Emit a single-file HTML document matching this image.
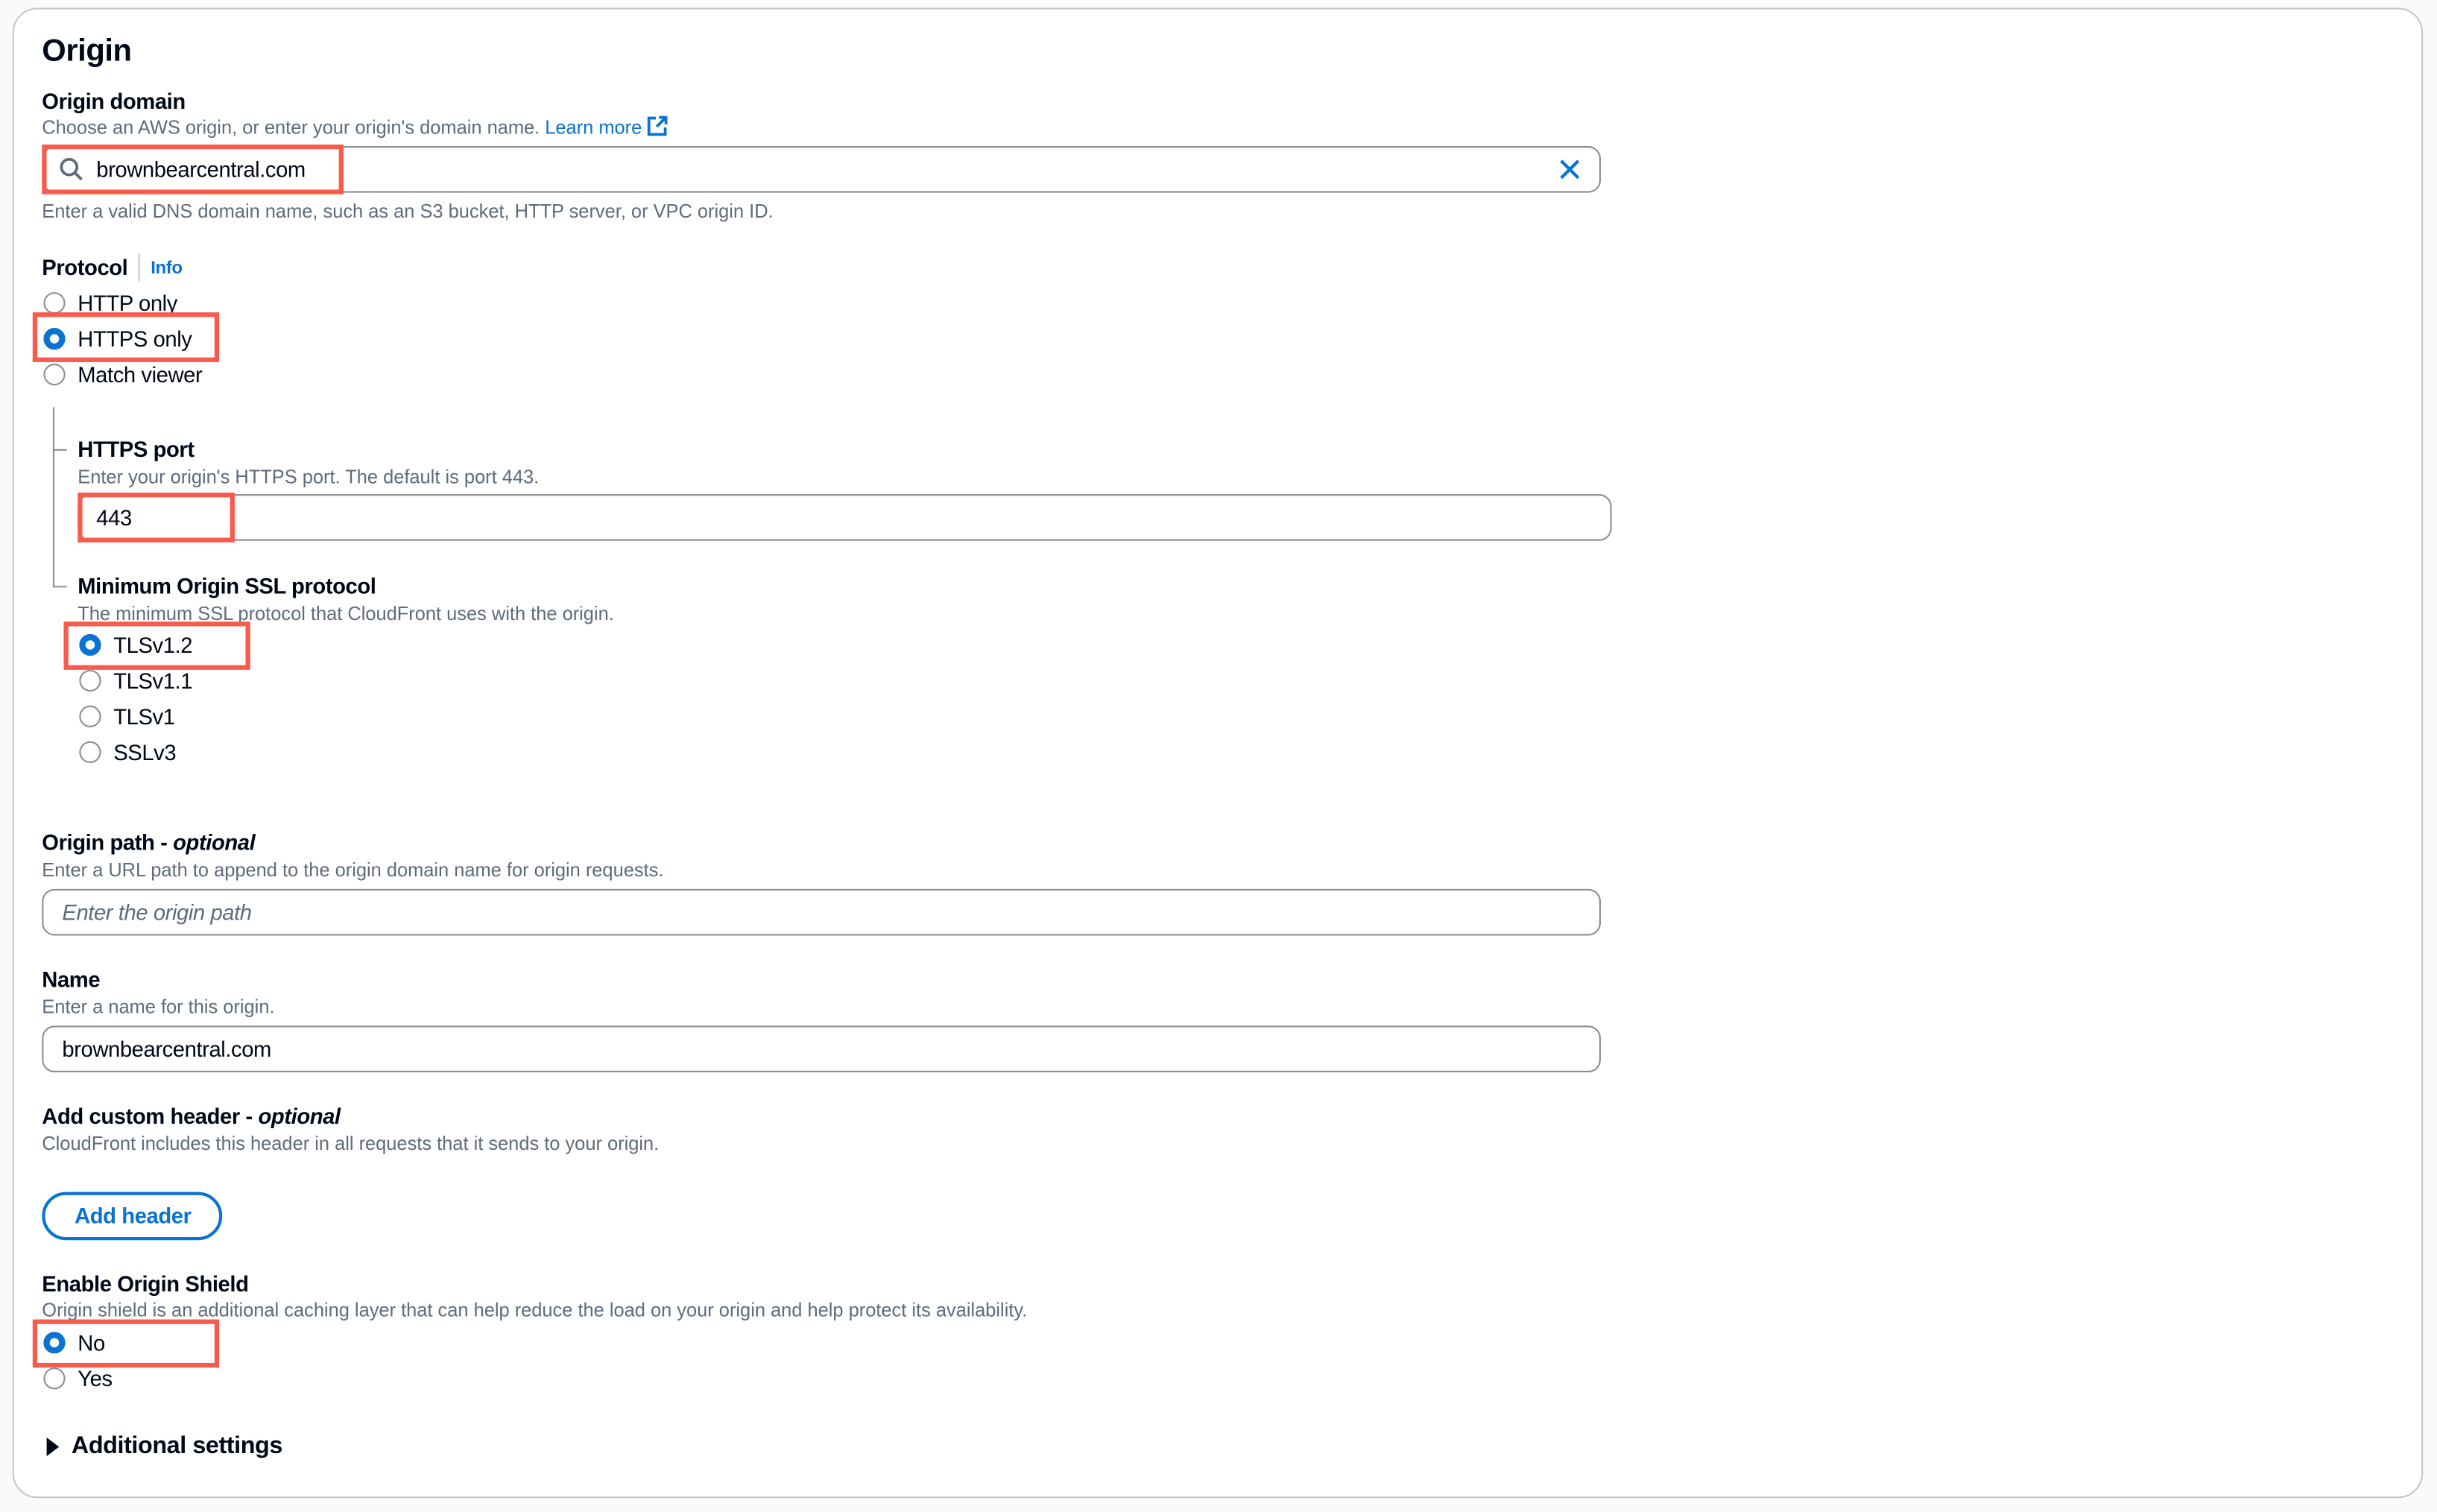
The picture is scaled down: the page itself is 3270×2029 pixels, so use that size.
<!DOCTYPE html>
<html><head><meta charset="utf-8"><style>
html,body{margin:0;padding:0;background:#fafafa;width:3270px;height:2028px;overflow:hidden}
#s{position:absolute;left:0;top:0;width:1568px;height:973px;transform:scale(2.08546);transform-origin:0 0;font-family:"Liberation Sans",sans-serif;color:#000716}
.card{position:absolute;left:8px;top:5px;width:1551px;height:959px;background:#fff;border:1px solid #c6c6cd;border-radius:16px;box-sizing:border-box}
.t{position:absolute;white-space:nowrap;line-height:20px;letter-spacing:-0.2px}
.b{font-weight:bold;font-size:14px}
.d{font-size:12.2px;color:#5f6b7a;letter-spacing:0}
.n{font-size:14px}
.in{position:absolute;height:30px;border:1px solid #8c8c94;border-radius:8px;box-sizing:border-box;background:#fff}
.red{position:absolute;border:3px solid #f85a4b;box-sizing:border-box}
.r{position:absolute;width:14px;height:14px;border:1.5px solid #8c8c94;border-radius:50%;box-sizing:border-box;background:#fff}
.rs{border:4px solid #0972d3}
</style></head><body><div id="s">
<div class="card"></div>
<div class="t" style="left:27px;top:23px;font-size:20px;font-weight:bold">Origin</div>
<div class="t b" style="left:27px;top:55px">Origin domain</div>
<div class="t d" style="left:27px;top:72px">Choose an AWS origin, or enter your origin's domain name. <span style="color:#0972d3">Learn more</span>
<svg width="14" height="14" viewBox="0 0 14 14" style="vertical-align:-2px"><path d="M6 2H1.5v10.5H12V8M8 1.5h4.5V6M12.5 1.5L6.5 7.5" fill="none" stroke="#0972d3" stroke-width="1.8"/></svg></div>
<div class="in" style="left:27px;top:94px;width:1003px"></div>
<svg style="position:absolute;left:38px;top:101px" width="16" height="16" viewBox="0 0 16 16"><circle cx="6.5" cy="6.5" r="5" fill="none" stroke="#5f6b7a" stroke-width="1.8"/><path d="M10 10l4.5 4.5" stroke="#5f6b7a" stroke-width="1.8"/></svg>
<div class="t n" style="left:62px;top:99px">brownbearcentral.com</div>
<svg style="position:absolute;left:1003px;top:102px" width="14" height="14" viewBox="0 0 14 14"><path d="M1.5 1.5l11 11M12.5 1.5l-11 11" stroke="#0972d3" stroke-width="2"/></svg>
<div class="red" style="left:27px;top:93px;width:194px;height:32px"></div>
<div class="t d" style="left:27px;top:126px">Enter a valid DNS domain name, such as an S3 bucket, HTTP server, or VPC origin ID.</div>

<div class="t b" style="left:27px;top:162px">Protocol</div>
<div style="position:absolute;left:89px;top:163px;width:1px;height:18px;background:#c6c6cd"></div>
<div class="t" style="left:97px;top:163px;font-size:11.5px;font-weight:bold;color:#0972d3">Info</div>
<div class="r" style="left:28px;top:188px"></div><div class="t n" style="left:50px;top:185px">HTTP only</div>
<div class="r rs" style="left:28px;top:211px"></div><div class="t n" style="left:50px;top:208px">HTTPS only</div>
<div class="r" style="left:28px;top:234px"></div><div class="t n" style="left:50px;top:231px">Match viewer</div>
<div class="red" style="left:21px;top:201px;width:120px;height:32px"></div>

<div style="position:absolute;left:34px;top:262px;width:1px;height:116px;background:#8c8c94"></div>
<div style="position:absolute;left:34px;top:289px;width:9px;height:1px;background:#8c8c94"></div>
<div style="position:absolute;left:34px;top:377px;width:9px;height:1px;background:#8c8c94"></div>
<div class="t b" style="left:50px;top:279px">HTTPS port</div>
<div class="t d" style="left:50px;top:297px">Enter your origin's HTTPS port. The default is port 443.</div>
<div class="in" style="left:50px;top:318px;width:987px"></div>
<div class="t n" style="left:62px;top:323px">443</div>
<div class="red" style="left:50px;top:317px;width:101px;height:32px"></div>

<div class="t b" style="left:50px;top:367px">Minimum Origin SSL protocol</div>
<div class="t d" style="left:50px;top:385px">The minimum SSL protocol that CloudFront uses with the origin.</div>
<div class="r rs" style="left:51px;top:408px"></div><div class="t n" style="left:73px;top:405px">TLSv1.2</div>
<div class="r" style="left:51px;top:431px"></div><div class="t n" style="left:73px;top:428px">TLSv1.1</div>
<div class="r" style="left:51px;top:454px"></div><div class="t n" style="left:73px;top:451px">TLSv1</div>
<div class="r" style="left:51px;top:477px"></div><div class="t n" style="left:73px;top:474px">SSLv3</div>
<div class="red" style="left:41px;top:400px;width:120px;height:31px"></div>

<div class="t b" style="left:27px;top:532px">Origin path - <i>optional</i></div>
<div class="t d" style="left:27px;top:550px">Enter a URL path to append to the origin domain name for origin requests.</div>
<div class="in" style="left:27px;top:572px;width:1003px"></div>
<div class="t n" style="left:40px;top:577px;font-style:italic;color:#5f6b7a">Enter the origin path</div>

<div class="t b" style="left:27px;top:620px">Name</div>
<div class="t d" style="left:27px;top:638px">Enter a name for this origin.</div>
<div class="in" style="left:27px;top:660px;width:1003px"></div>
<div class="t n" style="left:40px;top:665px">brownbearcentral.com</div>

<div class="t b" style="left:27px;top:708px">Add custom header - <i>optional</i></div>
<div class="t d" style="left:27px;top:726px">CloudFront includes this header in all requests that it sends to your origin.</div>
<div style="position:absolute;left:27px;top:767px;width:116px;height:31px;border:2px solid #0972d3;border-radius:16px;box-sizing:border-box"></div>
<div class="t b" style="left:48px;top:772px;color:#0972d3">Add header</div>

<div class="t b" style="left:27px;top:816px">Enable Origin Shield</div>
<div class="t d" style="left:27px;top:833px">Origin shield is an additional caching layer that can help reduce the load on your origin and help protect its availability.</div>
<div class="r rs" style="left:28px;top:857px"></div><div class="t n" style="left:50px;top:854px">No</div>
<div class="r" style="left:28px;top:880px"></div><div class="t n" style="left:50px;top:877px">Yes</div>
<div class="red" style="left:21px;top:849px;width:120px;height:31px"></div>

<svg style="position:absolute;left:30px;top:925px" width="8" height="12" viewBox="0 0 8 12"><path d="M0 0L8 6L0 12Z" fill="#000716"/></svg>
<div class="t" style="left:46px;top:921px;font-size:15.5px;font-weight:bold">Additional settings</div>
</div></body></html>
